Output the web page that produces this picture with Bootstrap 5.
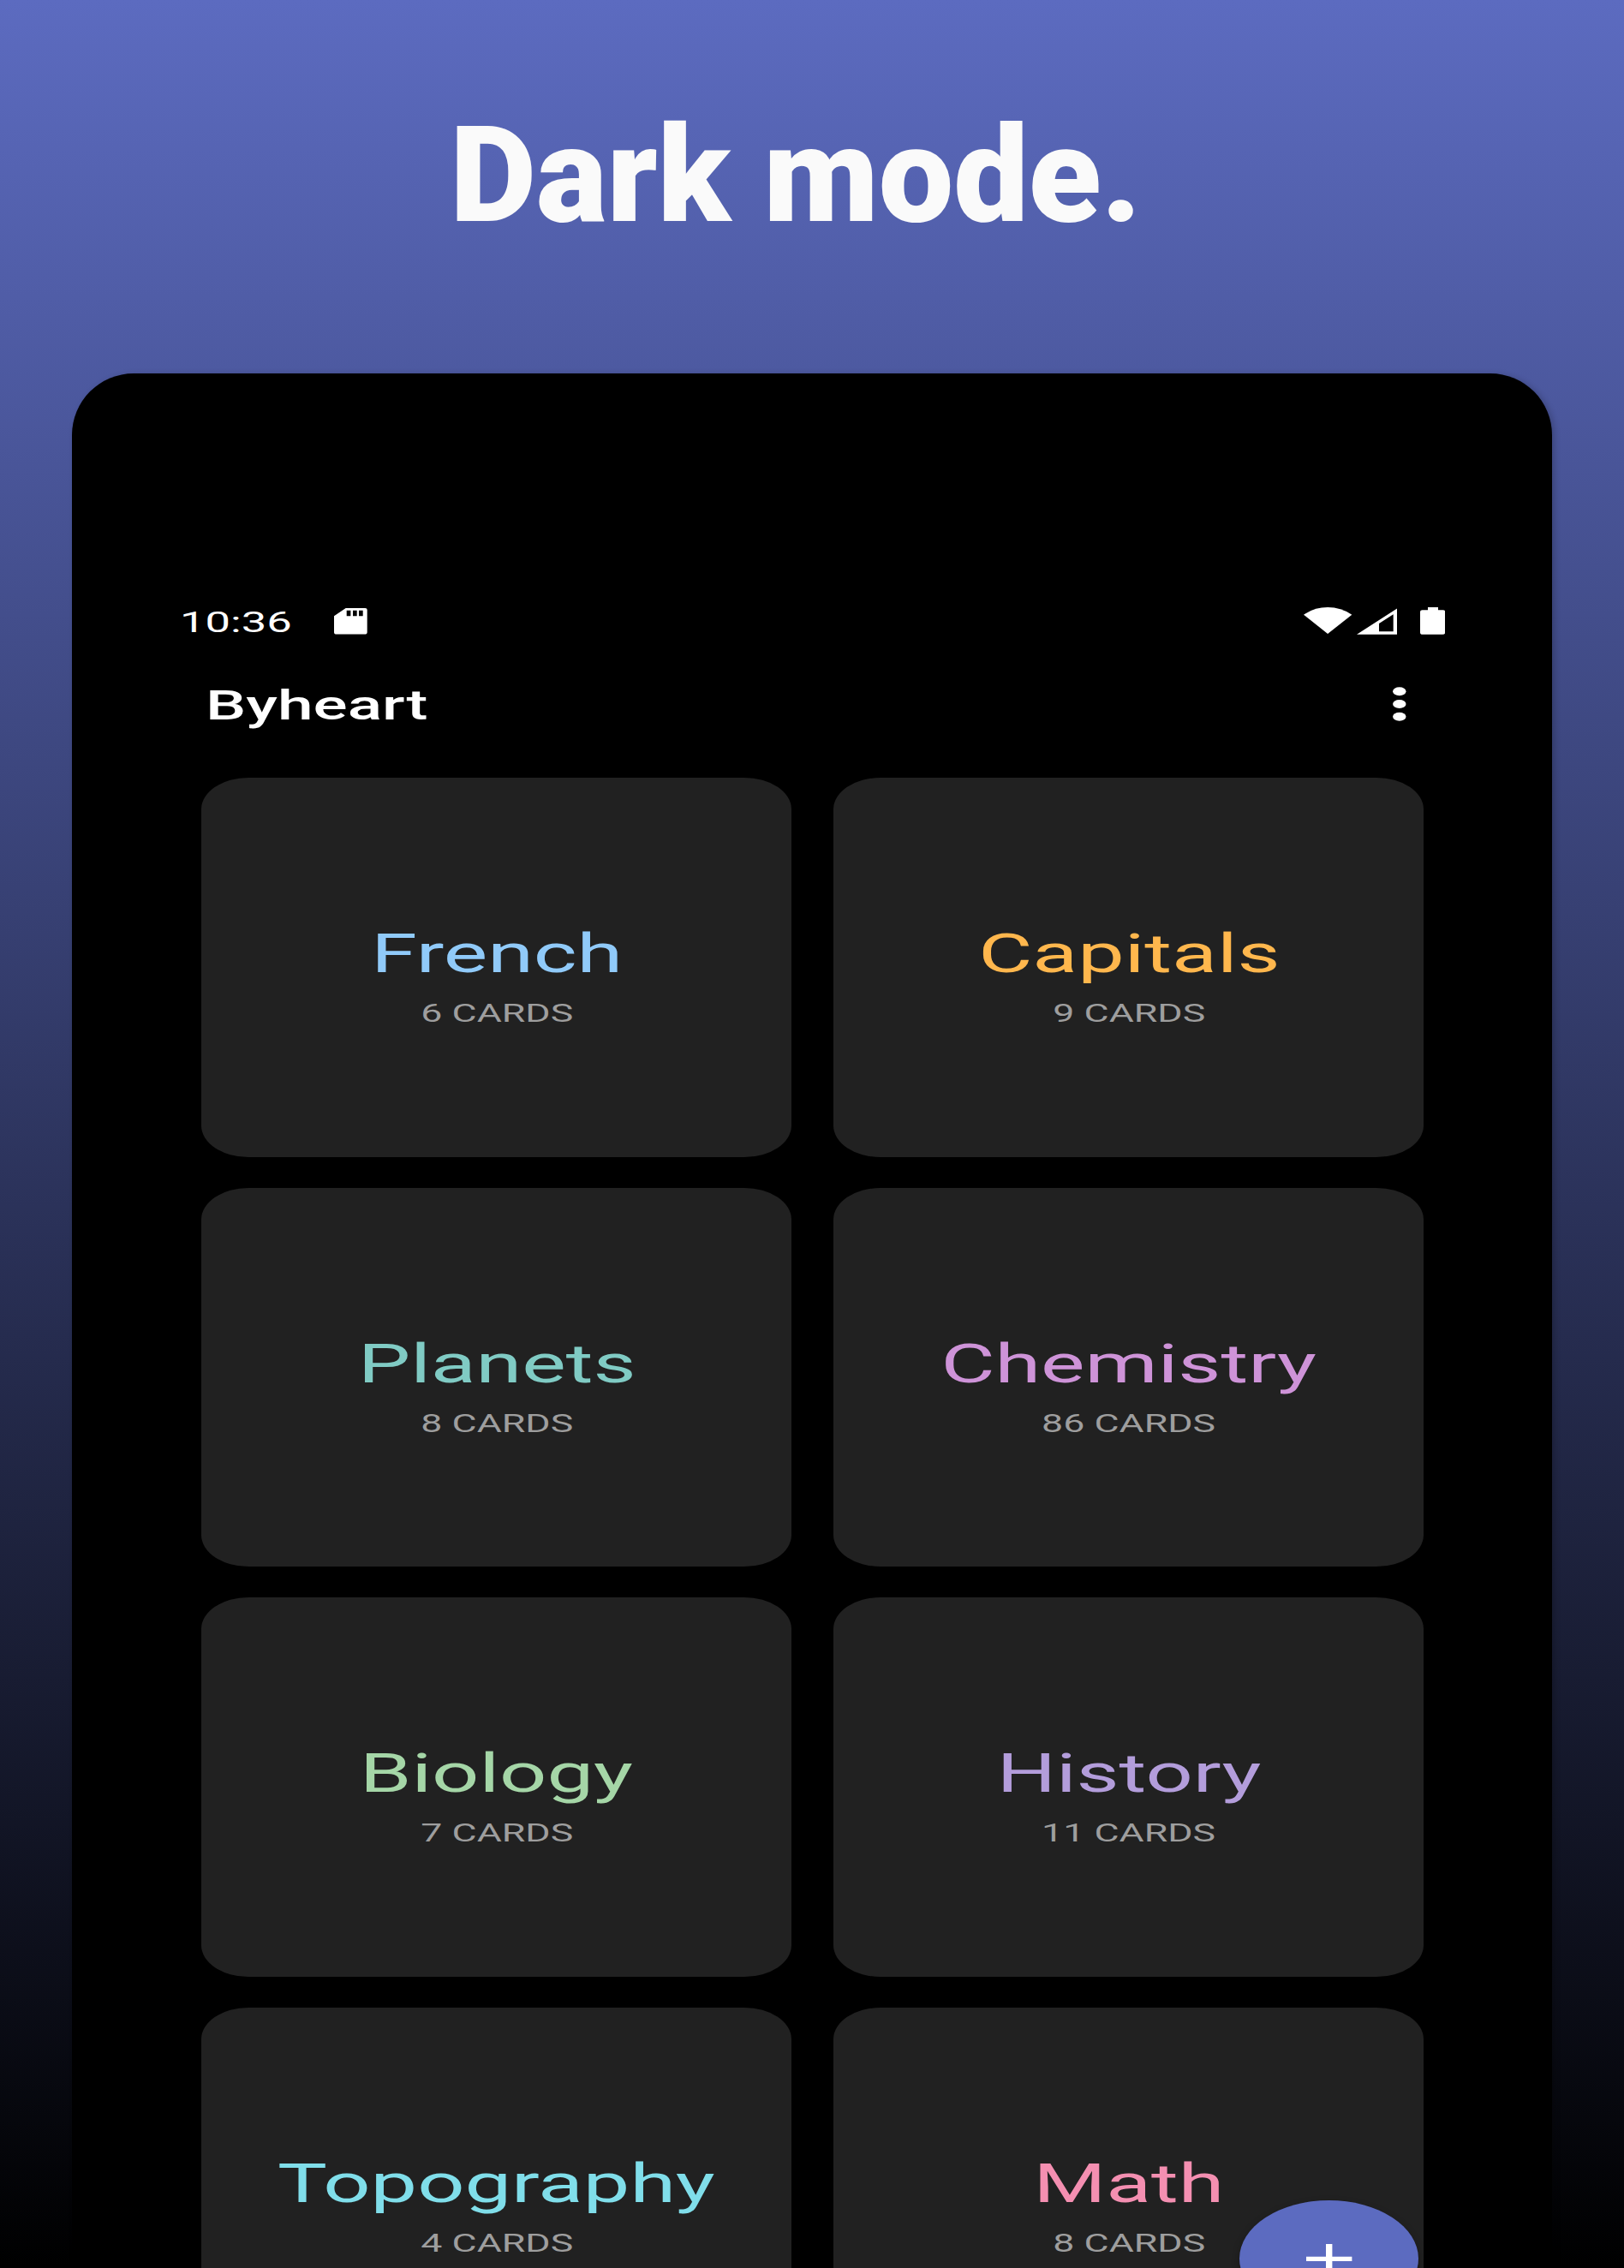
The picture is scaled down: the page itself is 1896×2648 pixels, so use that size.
<!DOCTYPE html>
<html lang="en">
<head>
<meta charset="utf-8">
<meta name="viewport" content="width=device-width, initial-scale=1">
<title>Byheart – Dark mode</title>
<link href="https://cdn.jsdelivr.net/npm/bootstrap@5.3.0/dist/css/bootstrap.min.css" rel="stylesheet">
<style>
  body { font-family: Roboto, "Liberation Sans", sans-serif; background: #000; }
  .promo { height: 2648px; padding: 0 84px; background: linear-gradient(#5c6bc0, #000); }
  .promo-head { height: 436px; padding: 112.6px 38px 0 0; }
  .promo-title { font-size: 156.6px; font-weight: 900; line-height: 184px; color: #fafafa; transform: scaleX(.994); }
  .phone { height: 2212px; padding: 270px 150px 0 150.5px; background: #000; border-radius: 72px 72px 0 0; box-shadow: 3px 1px 7px rgba(0, 0, 0, .2); }
  /* the app screen is stretched sideways */
  .wide { display: inline-block; transform: scaleX(1.53); transform-origin: 0 50%; white-space: nowrap; }
  .statusbar { height: 40px; margin: 0 -24.7px 0 -24.5px; font-size: 34px; line-height: 40px; color: #fff; }
  .statusbar svg { display: block; fill: #fff; }
  .clock { width: 180.3px; }
  .clock .wide { transform: scaleX(1.545); }
  .appbar { height: 57px; margin: 49.4px 20px 55.6px 5.1px; }
  .appbar .wide { font-size: 48.8px; font-weight: 500; line-height: 57px; color: #fff; transform: scaleX(1.535); }
  .decks { display: grid; grid-template-columns: 1fr 1fr; gap: 36px 48.7px; }
  .deck { height: 442.7px; padding-top: 168px; gap: 15.1px; background: #212121; border: 0; border-radius: 55px / 37px; }
  .deck .wide { transform-origin: 50% 50%; }
  .deck-name { font-size: 63.8px; line-height: 75px; }
  .deck .deck-name { transform: translateX(.6px) scaleX(1.522); }
  .deck-count { font-size: 29.5px; line-height: 35px; color: #9e9e9e; }
  .deck .deck-count { transform: translateX(.6px) scaleX(1.515); }
  .fab { right: 155.7px; top: 2133.4px; width: 209px; height: 136px; border-radius: 50%; background: #5c6bc0; box-shadow: 0 4px 10px rgba(0, 0, 0, .3); }
  .c-french { color: #90caf9; } .c-capitals { color: #ffb74d; }
  .c-planets { color: #80cbc4; } .c-chemistry { color: #ce93d8; }
  .c-biology { color: #a5d6a7; } .c-history { color: #b39ddb; }
  .c-topography { color: #80deea; } .c-math { color: #f48fb1; }
</style>
</head>
<body>
<main class="promo overflow-hidden">
  <header class="promo-head text-center">
    <h1 class="promo-title m-0">Dark mode.</h1>
  </header>
  <section class="phone position-relative">
    <div class="statusbar d-flex align-items-start">
      <div class="clock"><span class="wide">10:36</span></div>
      <svg class="mt-1" width="38.7" height="30.7" viewBox="0 0.7 38.7 30.7" preserveAspectRatio="none" aria-hidden="true"><path fill-rule="evenodd" d="M13.7.7H36.3q2.4 0 2.4 2V28.9q0 2.4-3 2.4H3q-3 0-3-2.4V10ZM14.7 3.4V10h4.7V3.4ZM22 3.4V10h4.7V3.4ZM29 3.4V10h4.7V3.4Z"/></svg>
      <div class="status-icons d-flex ms-auto" style="padding-top:3.3px">
        <svg width="56.3" height="31" viewBox="0 0 56.3 31" aria-hidden="true"><path d="M0 8.7Q12.5 0 28.1 0T56.3 8.7L28.1 31Z"/></svg>
        <svg style="margin:.7px 0 0 5px" width="47.7" height="30.7" viewBox="0 0 47.7 30.7" aria-hidden="true"><path fill-rule="evenodd" d="M0 30.7 47.7 0V30.7ZM26 18V27.3H42.7V7.3Z"/></svg>
        <svg style="margin-left:26.3px" width="29.2" height="31.7" viewBox="0 0 29.2 31.7" aria-hidden="true"><path d="M9 0H21V3.3H26.7q2.5 0 2.5 2V29.4q0 2.3-3 2.3H3q-3 0-3-2.3V5.3q0-2 2.5-2H9Z"/></svg>
      </div>
    </div>
    <div class="appbar d-flex justify-content-between align-items-start">
      <span class="wide">Byheart</span>
      <svg style="margin-top:6.6px" width="15.6" height="40" viewBox="0 0 15.6 40" fill="#fff" aria-hidden="true"><ellipse cx="7.8" cy="5.3" rx="7.7" ry="5"/><ellipse cx="7.8" cy="20" rx="7.7" ry="5"/><ellipse cx="7.8" cy="34.7" rx="7.7" ry="5"/></svg>
    </div>
    <div class="decks">
      <article class="deck card align-items-center"><span class="wide deck-name c-french">French</span><span class="wide deck-count">6 CARDS</span></article>
      <article class="deck card align-items-center"><span class="wide deck-name c-capitals">Capitals</span><span class="wide deck-count">9 CARDS</span></article>
      <article class="deck card align-items-center"><span class="wide deck-name c-planets">Planets</span><span class="wide deck-count">8 CARDS</span></article>
      <article class="deck card align-items-center"><span class="wide deck-name c-chemistry">Chemistry</span><span class="wide deck-count">86 CARDS</span></article>
      <article class="deck card align-items-center"><span class="wide deck-name c-biology">Biology</span><span class="wide deck-count">7 CARDS</span></article>
      <article class="deck card align-items-center"><span class="wide deck-name c-history">History</span><span class="wide deck-count">11 CARDS</span></article>
      <article class="deck card align-items-center"><span class="wide deck-name c-topography">Topography</span><span class="wide deck-count">4 CARDS</span></article>
      <article class="deck card align-items-center"><span class="wide deck-name c-math">Math</span><span class="wide deck-count">8 CARDS</span></article>
    </div>
    <button class="fab btn p-0 border-0 position-absolute d-flex align-items-center justify-content-center" aria-label="Add deck">
      <svg width="53.4" height="34.8" viewBox="0 0 53.4 34.8" fill="#fff"><path d="M23 0H30.4V14.8H53.4V20H30.4V34.8H23V20H0V14.8H23Z"/></svg>
    </button>
  </section>
</main>
<script src="https://cdn.jsdelivr.net/npm/bootstrap@5.3.0/dist/js/bootstrap.bundle.min.js"></script>
</body>
</html>
